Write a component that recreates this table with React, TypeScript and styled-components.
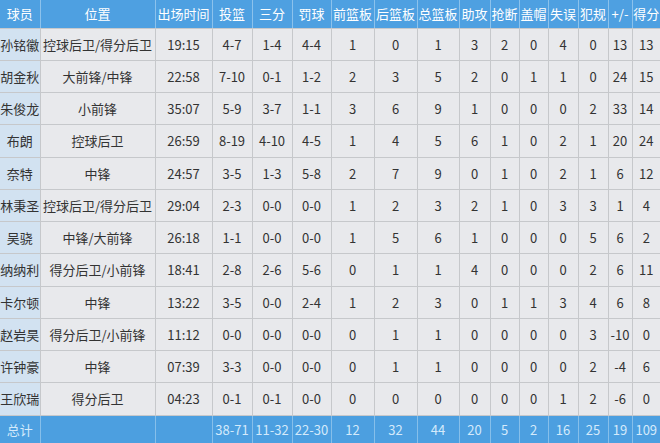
import React from "react";
import styled, { createGlobalStyle } from "styled-components";

const GlobalStyle = createGlobalStyle`
  html, body {
    margin: 0;
    padding: 0;
    background: #e8e9ec;
  }
  body {
    font-family: "Noto Sans CJK SC", "Noto Sans", sans-serif;
  }
`;

const widths = [40, 115, 57, 40, 40, 39, 43, 43, 42, 31, 29, 29, 30, 30, 24, 28];

const headers = [
  "球员", "位置", "出场时间", "投篮", "三分", "罚球", "前篮板", "后篮板",
  "总篮板", "助攻", "抢断", "盖帽", "失误", "犯规", "+/-", "得分"
];

const rows: string[][] = [
  ["孙铭徽", "控球后卫/得分后卫", "19:15", "4-7", "1-4", "4-4", "1", "0", "1", "3", "2", "0", "4", "0", "13", "13"],
  ["胡金秋", "大前锋/中锋", "22:58", "7-10", "0-1", "1-2", "2", "3", "5", "2", "0", "1", "1", "0", "24", "15"],
  ["朱俊龙", "小前锋", "35:07", "5-9", "3-7", "1-1", "3", "6", "9", "1", "0", "0", "0", "2", "33", "14"],
  ["布朗", "控球后卫", "26:59", "8-19", "4-10", "4-5", "1", "4", "5", "6", "1", "0", "2", "1", "20", "24"],
  ["奈特", "中锋", "24:57", "3-5", "1-3", "5-8", "2", "7", "9", "0", "1", "0", "2", "1", "6", "12"],
  ["林秉圣", "控球后卫/得分后卫", "29:04", "2-3", "0-0", "0-0", "1", "2", "3", "2", "1", "0", "3", "3", "1", "4"],
  ["吴骁", "中锋/大前锋", "26:18", "1-1", "0-0", "0-0", "1", "5", "6", "1", "0", "0", "0", "5", "6", "2"],
  ["纳纳利", "得分后卫/小前锋", "18:41", "2-8", "2-6", "5-6", "0", "1", "1", "4", "0", "0", "0", "2", "6", "11"],
  ["卡尔顿", "中锋", "13:22", "3-5", "0-0", "2-4", "1", "2", "3", "0", "1", "1", "3", "4", "6", "8"],
  ["赵岩昊", "得分后卫/小前锋", "11:12", "0-0", "0-0", "0-0", "0", "1", "1", "0", "0", "0", "0", "3", "-10", "0"],
  ["许钟豪", "中锋", "07:39", "3-3", "0-0", "0-0", "0", "1", "1", "0", "0", "0", "0", "2", "-4", "6"],
  ["王欣瑞", "得分后卫", "04:23", "0-1", "0-1", "0-0", "0", "0", "0", "0", "0", "0", "1", "2", "-6", "0"]
];

const totals = ["总计", "", "", "38-71", "11-32", "22-30", "12", "32", "44", "20", "5", "2", "16", "25", "19", "109"];

const Table = styled.table`
  width: 660px;
  table-layout: fixed;
  border-collapse: collapse;
  font-size: 13px;
  color: #333;
`;

const HeadRow = styled.tr`
  height: 28px;
  background: #4ea0e1;
`;

const HeadCell = styled.th`
  padding: 0;
  font-weight: normal;
  color: #fff;
  text-align: center;
  white-space: nowrap;
  overflow: hidden;
  border-left: 1px solid #8cc2ec;
  border-bottom: 1px solid #c7c9cc;
  &:first-child {
    border-left: none;
  }
`;

const BodyRow = styled.tr`
  height: 32.25px;
`;

const Cell = styled.td<{ $name?: boolean }>`
  padding: 0;
  text-align: center;
  white-space: nowrap;
  overflow: hidden;
  background: ${(p) => (p.$name ? "#d2e2f1" : "#e8e9ec")};
  border: 1px solid #c6c8cb;
  &:first-child {
    border-left: none;
  }
  &:last-child {
    border-right: none;
  }
`;

const TotalRow = styled.tr`
  height: 28px;
  background: #4c9fe0;
`;

const TotalCell = styled.td`
  padding: 0;
  text-align: center;
  white-space: nowrap;
  overflow: hidden;
  color: #d4eafb;
  border-left: 1px solid #86bfea;
  &:first-child {
    border-left: none;
  }
`;

export default function App(): JSX.Element {
  return (
    <>
      <GlobalStyle />
      <Table>
        <colgroup>
          {widths.map((w, i) => (
            <col key={i} style={{ width: w }} />
          ))}
        </colgroup>
        <thead>
          <HeadRow>
            {headers.map((h) => (
              <HeadCell key={h}>{h}</HeadCell>
            ))}
          </HeadRow>
        </thead>
        <tbody>
          {rows.map((row) => (
            <BodyRow key={row[0]}>
              {row.map((v, i) => (
                <Cell key={i} $name={i === 0}>
                  {v}
                </Cell>
              ))}
            </BodyRow>
          ))}
          <TotalRow>
            {totals.map((v, i) => (
              <TotalCell key={i}>{v}</TotalCell>
            ))}
          </TotalRow>
        </tbody>
      </Table>
    </>
  );
}
